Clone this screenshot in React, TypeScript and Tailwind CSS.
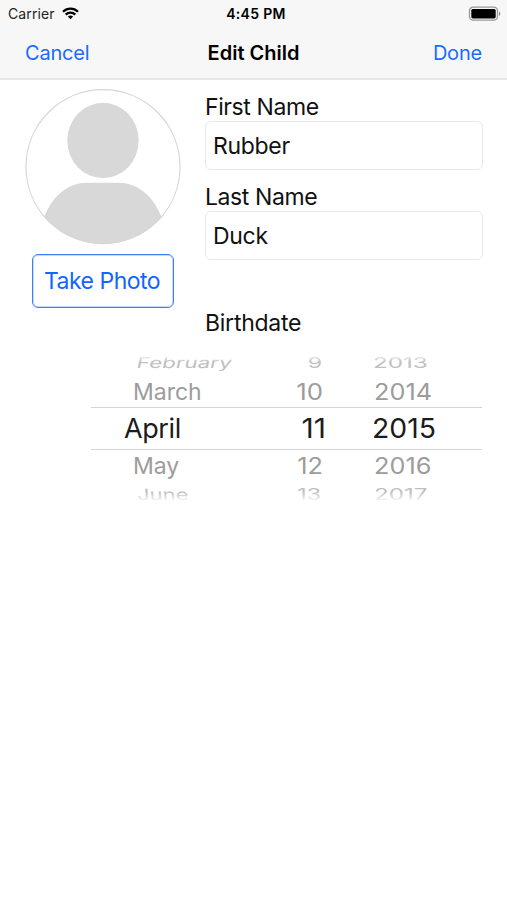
import React from "react";

type Cell = { text: string; className: string };

function PickerRow({ className, cells }: { className: string; cells: Cell[] }) {
  return (
    <div className={`flex items-center ${className}`}>
      {cells.map((cell) => (
        <span key={cell.text} className={`block shrink-0 whitespace-nowrap ${cell.className}`}>
          {cell.text}
        </span>
      ))}
    </div>
  );
}

function Avatar() {
  return (
    <svg width="156" height="156" viewBox="0 0 156 156" className="block">
      <defs>
        <clipPath id="avatar-clip">
          <circle cx="78" cy="77.7" r="77.2" />
        </clipPath>
      </defs>
      <g clipPath="url(#avatar-clip)" fill="#d8d8d8">
        <ellipse cx="78" cy="51.5" rx="35.7" ry="37.7" />
        <path d="M13 156 C16 118 36 93.7 62 93.7 H93 C120 93.7 139 118 143 156 Z" />
      </g>
      <circle cx="78" cy="77.7" r="77" fill="none" stroke="#d6d6d6" strokeWidth="1.2" />
    </svg>
  );
}

function Field({ label, value }: { label: string; value: string }) {
  return (
    <label className="block">
      <span className="block h-[30px] pt-px text-[23px] leading-[30px] tracking-[-.4px]">{label}</span>
      <span className="flex h-[49px] w-[278px] items-center rounded-[6px] border border-[#e8e8e8] pt-px pl-[7px] text-[23px] tracking-[-.3px]">
        {value}
      </span>
    </label>
  );
}

export default function App() {
  return (
    <div className="h-[900px] w-[507px] overflow-hidden bg-white font-['Inter',sans-serif] text-[#111]">
      <header className="h-20 border-b-2 border-[#e6e6e6] bg-[#f7f7f7]">
        <div className="grid h-7 grid-cols-3 items-center pr-[6px] pl-[8px] text-[14px]">
          <div className="flex items-center gap-[7px] text-[#222]">
            <span className="pb-px tracking-[.1px]">Carrier</span>
            <svg width="17" height="13" viewBox="0 0 17 13" fill="none" stroke="#000" strokeWidth="2.3" className="-mt-px">
              <path d="M1 4.7 C5.2 .6 11.8 .6 16 4.7" />
              <path d="M3.7 7.6 C6.4 5 10.6 5 13.3 7.6" />
              <path d="M5.9 9.6 C7.3 8.2 9.7 8.2 11.1 9.6 L8.5 12.3 Z" fill="#000" stroke="none" />
            </svg>
          </div>
          <span className="pb-px pl-[3px] text-center font-semibold tracking-[.3px] text-black">4:45 PM</span>
          <svg width="33" height="16" viewBox="0 0 33 16" className="-mt-px justify-self-end">
            <rect x="1.5" y="1.2" width="28" height="13" rx="3.6" fill="none" stroke="#999" strokeWidth="1.3" />
            <rect x="3.3" y="3" width="24.4" height="9.4" rx="1.6" fill="#000" />
            <path d="M31 5.5 C32.8 6.2 32.8 9.2 31 9.9 Z" fill="#888" />
          </svg>
        </div>
        <nav className="grid h-[49px] grid-cols-3 items-center px-[25px] text-[20px]">
          <span className="tracking-[-.2px] text-[#1a6bff]">Cancel</span>
          <span className="text-center font-semibold text-black">Edit Child</span>
          <span className="text-right tracking-[-.2px] text-[#1a6bff]">Done</span>
        </nav>
      </header>

      <main>
        <section className="flex pt-[9px] pl-[25px]">
          <div className="flex w-[156px] flex-col items-center">
            <Avatar />
            <button className="mt-[9px] h-[54px] w-[142px] rounded-[6px] border border-[#3f7ff8] pr-[2px] text-[23px] tracking-[-.5px] whitespace-nowrap text-[#1166ff] ring-1 ring-[#3f7ff8]/30 ring-inset">
              Take Photo
            </button>
          </div>
          <div className="ml-6 pt-[2px]">
            <Field label="First Name" value="Rubber" />
            <div className="h-[11px]" />
            <Field label="Last Name" value="Duck" />
            <h2 className="mt-[47px] h-[30px] pt-px text-[23px] leading-[30px] tracking-[-.25px]">Birthdate</h2>
          </div>
        </section>

        <section className="relative mt-[17px] ml-[91px] h-[148px] w-[391px]">
          <PickerRow
            className="h-4 pt-px text-[22px] leading-5 text-[#c0c0c0]"
            cells={[
              { text: "February", className: "ml-[46px] w-[97px] origin-left -skew-x-8 scale-x-[1.02] scale-y-[.68]" },
              { text: "9", className: "ml-[60px] w-[28px] origin-right scale-x-[1.05] scale-y-[.68] text-right" },
              { text: "2013", className: "ml-[51px] w-[60px] origin-left scale-x-[1.1] scale-y-[.68]" },
            ]}
          />
          <PickerRow
            className="mt-[6px] h-[31px] pt-px text-[23px] text-[#9c9c9c]"
            cells={[
              { text: "March", className: "ml-[42px] w-[90px]" },
              { text: "10", className: "ml-[60px] w-[40px] origin-right scale-x-[1.12] text-right" },
              { text: "2014", className: "ml-[51px] w-[60px] origin-left scale-x-[1.1]" },
            ]}
          />
          <PickerRow
            className="h-[43px] border-y border-[#d4d4d4] pt-px text-[27px] text-[#1c1c1c]"
            cells={[
              { text: "April", className: "ml-[33px] w-[90px] tracking-[-.4px]" },
              { text: "11", className: "ml-[72px] w-[40px] origin-right scale-x-[1.12] text-right" },
              { text: "2015", className: "ml-[46px] w-[70px] origin-left scale-x-[1.05]" },
            ]}
          />
          <PickerRow
            className="h-8 text-[23px] text-[#9c9c9c]"
            cells={[
              { text: "May", className: "ml-[42px] w-[90px]" },
              { text: "12", className: "ml-[60px] w-[40px] origin-right scale-x-[1.1] text-right" },
              { text: "2016", className: "ml-[51px] w-[60px] origin-left scale-x-[1.1]" },
            ]}
          />
          <PickerRow
            className="h-5 pt-[5px] text-[22px] leading-[15px] text-[#c0c0c0]"
            cells={[
              { text: "June", className: "ml-[46px] w-[90px] origin-left skew-x-3 scale-y-[.7]" },
              { text: "13", className: "ml-[55px] w-[39px] origin-right scale-x-[1.05] scale-y-[.7] text-right" },
              { text: "2017", className: "ml-[53px] w-[60px] origin-left scale-x-[1.1] scale-y-[.7]" },
            ]}
          />
          <div className="absolute inset-x-0 top-0 h-[8px] bg-linear-to-b from-white to-white/0" />
          <div className="absolute inset-x-0 bottom-0 h-[10px] bg-linear-to-t from-white to-white/0" />
        </section>
      </main>
    </div>
  );
}
